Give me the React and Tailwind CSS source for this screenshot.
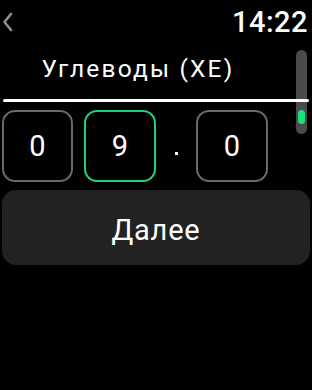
export default function App() {
  const font = { fontFamily: 'Roboto, "Noto Sans", sans-serif' };
  return (
    <div className="w-[312px] h-[390px] bg-black text-white overflow-hidden relative" style={font}>
      <div className="flex items-start justify-between h-[44px] pl-[2px] pr-[4px] pt-[7px]">
        <svg width="11" height="20" viewBox="0 0 11 20" className="mt-[5px]">
          <path d="M9 2 L2.5 10 L9 18" stroke="#8e8e93" strokeWidth="2.6" fill="none" strokeLinecap="round" strokeLinejoin="round" />
        </svg>
        <div className="text-[29px] leading-[30px] font-medium tracking-[0.5px]">14:22</div>
      </div>
      <div className="flex justify-center pr-[36px] pt-[10px] h-[55px]">
        <div className="text-[24.5px] leading-[30px] tracking-[2.2px]">Углеводы (XE)</div>
      </div>
      <div className="mx-[3px] h-[3px] bg-white rounded-full relative z-10"></div>
      <div className="flex items-center pl-[2px] pt-[8px] gap-[11px]">
        <div className="w-[71px] h-[72px] rounded-[13px] border-[2.5px] border-[#6a6a6a] flex items-center justify-center text-[29px] pt-[2px]">0</div>
        <div className="w-[72px] h-[72px] rounded-[13px] border-[2.5px] border-[#1ed47a] flex items-center justify-center text-[29px] pt-[2px]">9</div>
        <div className="w-[18px] flex justify-center"><div className="w-[3px] h-[3px] bg-white mt-[14px]"></div></div>
        <div className="w-[72px] h-[72px] rounded-[13px] border-[2.5px] border-[#6a6a6a] flex items-center justify-center text-[29px] pt-[2px]">0</div>
      </div>
      <div className="mx-[2px] mt-[8px] h-[75px] rounded-[14px] bg-[#222222] flex items-center justify-center text-[29px] tracking-[0.8px] pt-[6px]">Далее</div>
      <div className="absolute left-[296px] top-[50px] w-[11px] h-[84px] rounded-full bg-[#4a4a4a]">
        <div className="absolute left-[2px] top-[60px] w-[7px] h-[14px] rounded-full bg-[#1ee07a]"></div>
      </div>
    </div>
  );
}
